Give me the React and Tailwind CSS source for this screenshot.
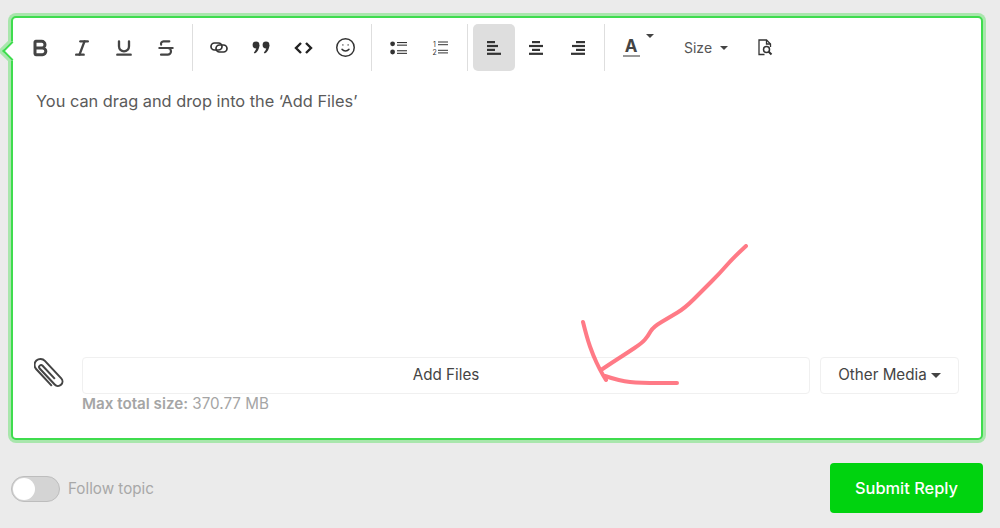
import React from "react";
import { Bold, Italic, Underline, Strikethrough, Smile } from "lucide-react";

const LinkIcon = () => (
  <svg width="18" height="11" viewBox="0 0 18 11" fill="none" stroke="#333" strokeWidth="1.7">
    <rect x="1" y="1" width="11" height="7" rx="3.5" />
    <rect x="6" y="3" width="11" height="7" rx="3.5" />
  </svg>
);

const QuoteIcon = () => (
  <svg width="18" height="13" viewBox="0 0 18 13" fill="#333">
    <circle cx="4" cy="4" r="3.4" />
    <path d="M7.4 4c0 4-2 7-4.600 8.600l-1-1.200C3.400 10 4.400 8 4.400 6z" />
    <circle cx="14" cy="4" r="3.4" />
    <path d="M17.400 4c0 4-2 7-4.600 8.600l-1-1.200c1.600-1.400 2.600-3.400 2.600-5.400z" />
  </svg>
);

const CodeIcon = () => (
  <svg width="19" height="12" viewBox="0 0 19 12" fill="none" stroke="#222" strokeWidth="2.4">
    <path d="M7 1 2 6l5 5M12 1l5 5-5 5" />
  </svg>
);

const BulletList = () => (
  <svg width="17" height="14" viewBox="0 0 17 14" fill="#333">
    <circle cx="2.6" cy="2.8" r="2.4" />
    <circle cx="2.6" cy="11" r="2.4" />
    <rect x="7" y="1" width="10" height="1.1" />
    <rect x="7" y="3.6" width="10" height="1.1" />
    <rect x="7" y="9.2" width="10" height="1.1" />
    <rect x="7" y="11.800" width="10" height="1.1" />
  </svg>
);

const NumberList = () => (
  <svg width="16" height="16" viewBox="0 0 16 16" fill="#333">
    <text x="1" y="7" fontSize="7" fontFamily="Inter, sans-serif">1</text>
    <text x="0.5" y="15" fontSize="7" fontFamily="Inter, sans-serif">2</text>
    <rect x="6" y="1.500" width="10" height="1" />
    <rect x="6" y="4.200" width="10" height="1" />
    <rect x="6" y="9.800" width="10" height="1" />
    <rect x="6" y="12.400" width="10" height="1" />
  </svg>
);

const AlignIcon = ({ bars }) => (
  <svg width="15" height="14" viewBox="0 0 15 14" fill="#333">
    {bars.map((b, i) => (
      <rect key={i} x={b[0]} y={i * 3.9} width={b[1]} height="2.2" />
    ))}
  </svg>
);

const PreviewIcon = () => (
  <svg width="15" height="17" viewBox="0 0 15 17" fill="none" stroke="#333" strokeWidth="1.3">
    <path d="M6.500 15.500H1V1h7.500L12.500 5v3" />
    <path d="M8.500 1v4h4" />
    <circle cx="8.500" cy="10.500" r="3" strokeWidth="1.500" />
    <path d="m10.700 12.700 2.800 2.800" strokeWidth="2" />
  </svg>
);

const ClipIcon = () => (
  <svg width="30" height="32" viewBox="0 0 30 32" fill="none" stroke="#444" strokeWidth="2" className="shrink-0">
    <g transform="translate(14 16) rotate(47) translate(-18 -7)">
      <path d="M27 6H9a2 2 0 0 0 0 4h22a4.500 4.500 0 0 0 0-9H7a6 6 0 0 0 0 12h23" />
    </g>
  </svg>
);

const Caret = ({ className }) => (
  <span className={`inline-block w-0 h-0 border-x-[4px] border-x-transparent border-t-[4px] border-t-[#444] ${className}`} />
);

const Btn = ({ active, children }) => (
  <div className={`w-[42px] h-[47px] flex items-center justify-center rounded-[5px] ${active ? "bg-[#dedede]" : ""}`}>
    {children}
  </div>
);

const Sep = ({ className = "" }) => <div className={`w-px h-[47px] mx-[5px] bg-[#dedede] ${className}`} />;

// midpoint smoothing for the hand drawn strokes
const smooth = (pts) => {
  let d = `M${pts[0][0]} ${pts[0][1]}`;
  for (let i = 1; i < pts.length - 1; i++) {
    const mx = (pts[i][0] + pts[i + 1][0]) / 2;
    const my = (pts[i][1] + pts[i + 1][1]) / 2;
    d += ` Q${pts[i][0]} ${pts[i][1]} ${mx} ${my}`;
  }
  const last = pts[pts.length - 1];
  return d + ` L${last[0]} ${last[1]}`;
};

const shaft = [[746, 246], [733, 258], [720, 273], [703, 290], [685, 308], [670, 317], [653, 327], [648, 336], [642, 343], [627, 353], [613, 362], [601, 370]];
const headTop = [[583, 322], [587, 338], [593, 355], [600, 370], [606, 380]];
const headBottom = [[605, 376], [620, 381], [640, 383], [677, 383]];

export default function App() {
  return (
    <div className="relative h-[528px] overflow-hidden bg-[#ebebeb] pt-[16px] px-[11px] font-['Inter',sans-serif] text-[#444]">
      <div className="relative h-[424px] w-[972px] bg-white border-2 border-[#3fdc4e] rounded-[5px] shadow-[0_0_0_3px_#a8e6ac] flex flex-col">
        {/* little pointer on the left edge */}
        <div className="absolute left-[-8px] top-[26px] w-[14px] h-[14px] rotate-45 bg-white border-b-2 border-l-2 border-[#3fdc4e] shadow-[-2px_2px_0_1px_#a8e6ac]" />

        <div className="relative flex items-center pl-[6px] pt-[6px]">
          <Btn><Bold size={20} strokeWidth={3.6} color="#444" /></Btn>
          <Btn><Italic size={20} strokeWidth={2.8} color="#444" /></Btn>
          <Btn><Underline size={20} strokeWidth={2.8} color="#444" /></Btn>
          <Btn><Strikethrough size={20} strokeWidth={2.6} color="#444" /></Btn>
          <Sep />
          <Btn><LinkIcon /></Btn>
          <Btn><QuoteIcon /></Btn>
          <Btn><CodeIcon /></Btn>
          <Btn><Smile size={21} strokeWidth={1.7} color="#333" /></Btn>
          <Sep />
          <Btn><BulletList /></Btn>
          <Btn><NumberList /></Btn>
          <Sep className="ml-[6px]" />
          <Btn active><AlignIcon bars={[[0, 8], [0, 11], [0, 8], [0, 14]]} /></Btn>
          <Btn><AlignIcon bars={[[3, 8], [0, 14], [3, 8], [0, 14]]} /></Btn>
          <Btn><AlignIcon bars={[[5, 9], [1, 13], [5, 9], [0, 14]]} /></Btn>
          <Sep />
          <Btn>
            <div className="relative flex flex-col items-center">
              <span className="text-[17px] leading-[15px] font-bold text-[#444]">A</span>
              <span className="w-[17px] h-[2px] mt-[1px] bg-[#999]" />
              <Caret className="absolute right-[-14px] top-[-5px]" />
            </div>
          </Btn>
          <div className="w-[92px] h-[47px] flex items-center pl-[32px] gap-[8px] text-[14px] text-[#555]">
            Size <Caret />
          </div>
          <Btn><PreviewIcon /></Btn>
        </div>

        <p className="pl-[23px] pt-[18px] text-[16.35px] leading-[24px] text-[#5a5a5a] flex-1">
          You can drag and drop into the ‘Add Files’
        </p>

        <div className="flex pl-[21px] pr-[22px]">
          <ClipIcon />
          <div className="ml-[18px] flex-1">
            <div className="flex gap-[10px]">
              <div className="flex-1 h-[37px] flex items-center justify-center rounded-[4px] border border-[#f0f0f0] text-[15.2px]">
                Add Files
              </div>
              <div className="w-[139px] h-[37px] flex items-center justify-center gap-[4px] rounded-[4px] border border-[#f0f0f0] text-[15.2px]">
                Other Media <Caret className="border-x-[5px] border-t-[5px]" />
              </div>
            </div>
            <p className="text-[15.2px] leading-[20px] text-[#a5a5a5]">
              <strong className="font-semibold">Max total size:</strong> 370.77 MB
            </p>
          </div>
        </div>
        <div className="h-[24px]" />
      </div>

      <div className="flex items-center justify-between mt-[23px] h-[50px]">
        <div className="flex items-center gap-[8px] mt-[2px]">
          <div className="w-[49px] h-[26px] rounded-full bg-[#d4d4d4] border border-[#bdbdbd] flex items-center pl-[1px]">
            <div className="w-[22px] h-[22px] rounded-full bg-white" />
          </div>
          <span className="text-[15.2px] text-[#a8a8a8] mt-[1px]">Follow topic</span>
        </div>
        <div className="w-[153px] h-[50px] mr-[6px] flex items-center justify-center rounded-[4px] bg-[#00d30f] text-white text-[16.4px] font-medium">
          Submit Reply
        </div>
      </div>

      {/* hand drawn arrow on top of the screenshot */}
      <svg className="absolute inset-0 pointer-events-none" width="1000" height="528" fill="none" stroke="#ff5a68" strokeWidth="4" strokeLinecap="round" strokeLinejoin="round" opacity="0.8">
        <path d={smooth(shaft)} />
        <path d={smooth(headTop)} />
        <path d={smooth(headBottom)} />
      </svg>
    </div>
  );
}
